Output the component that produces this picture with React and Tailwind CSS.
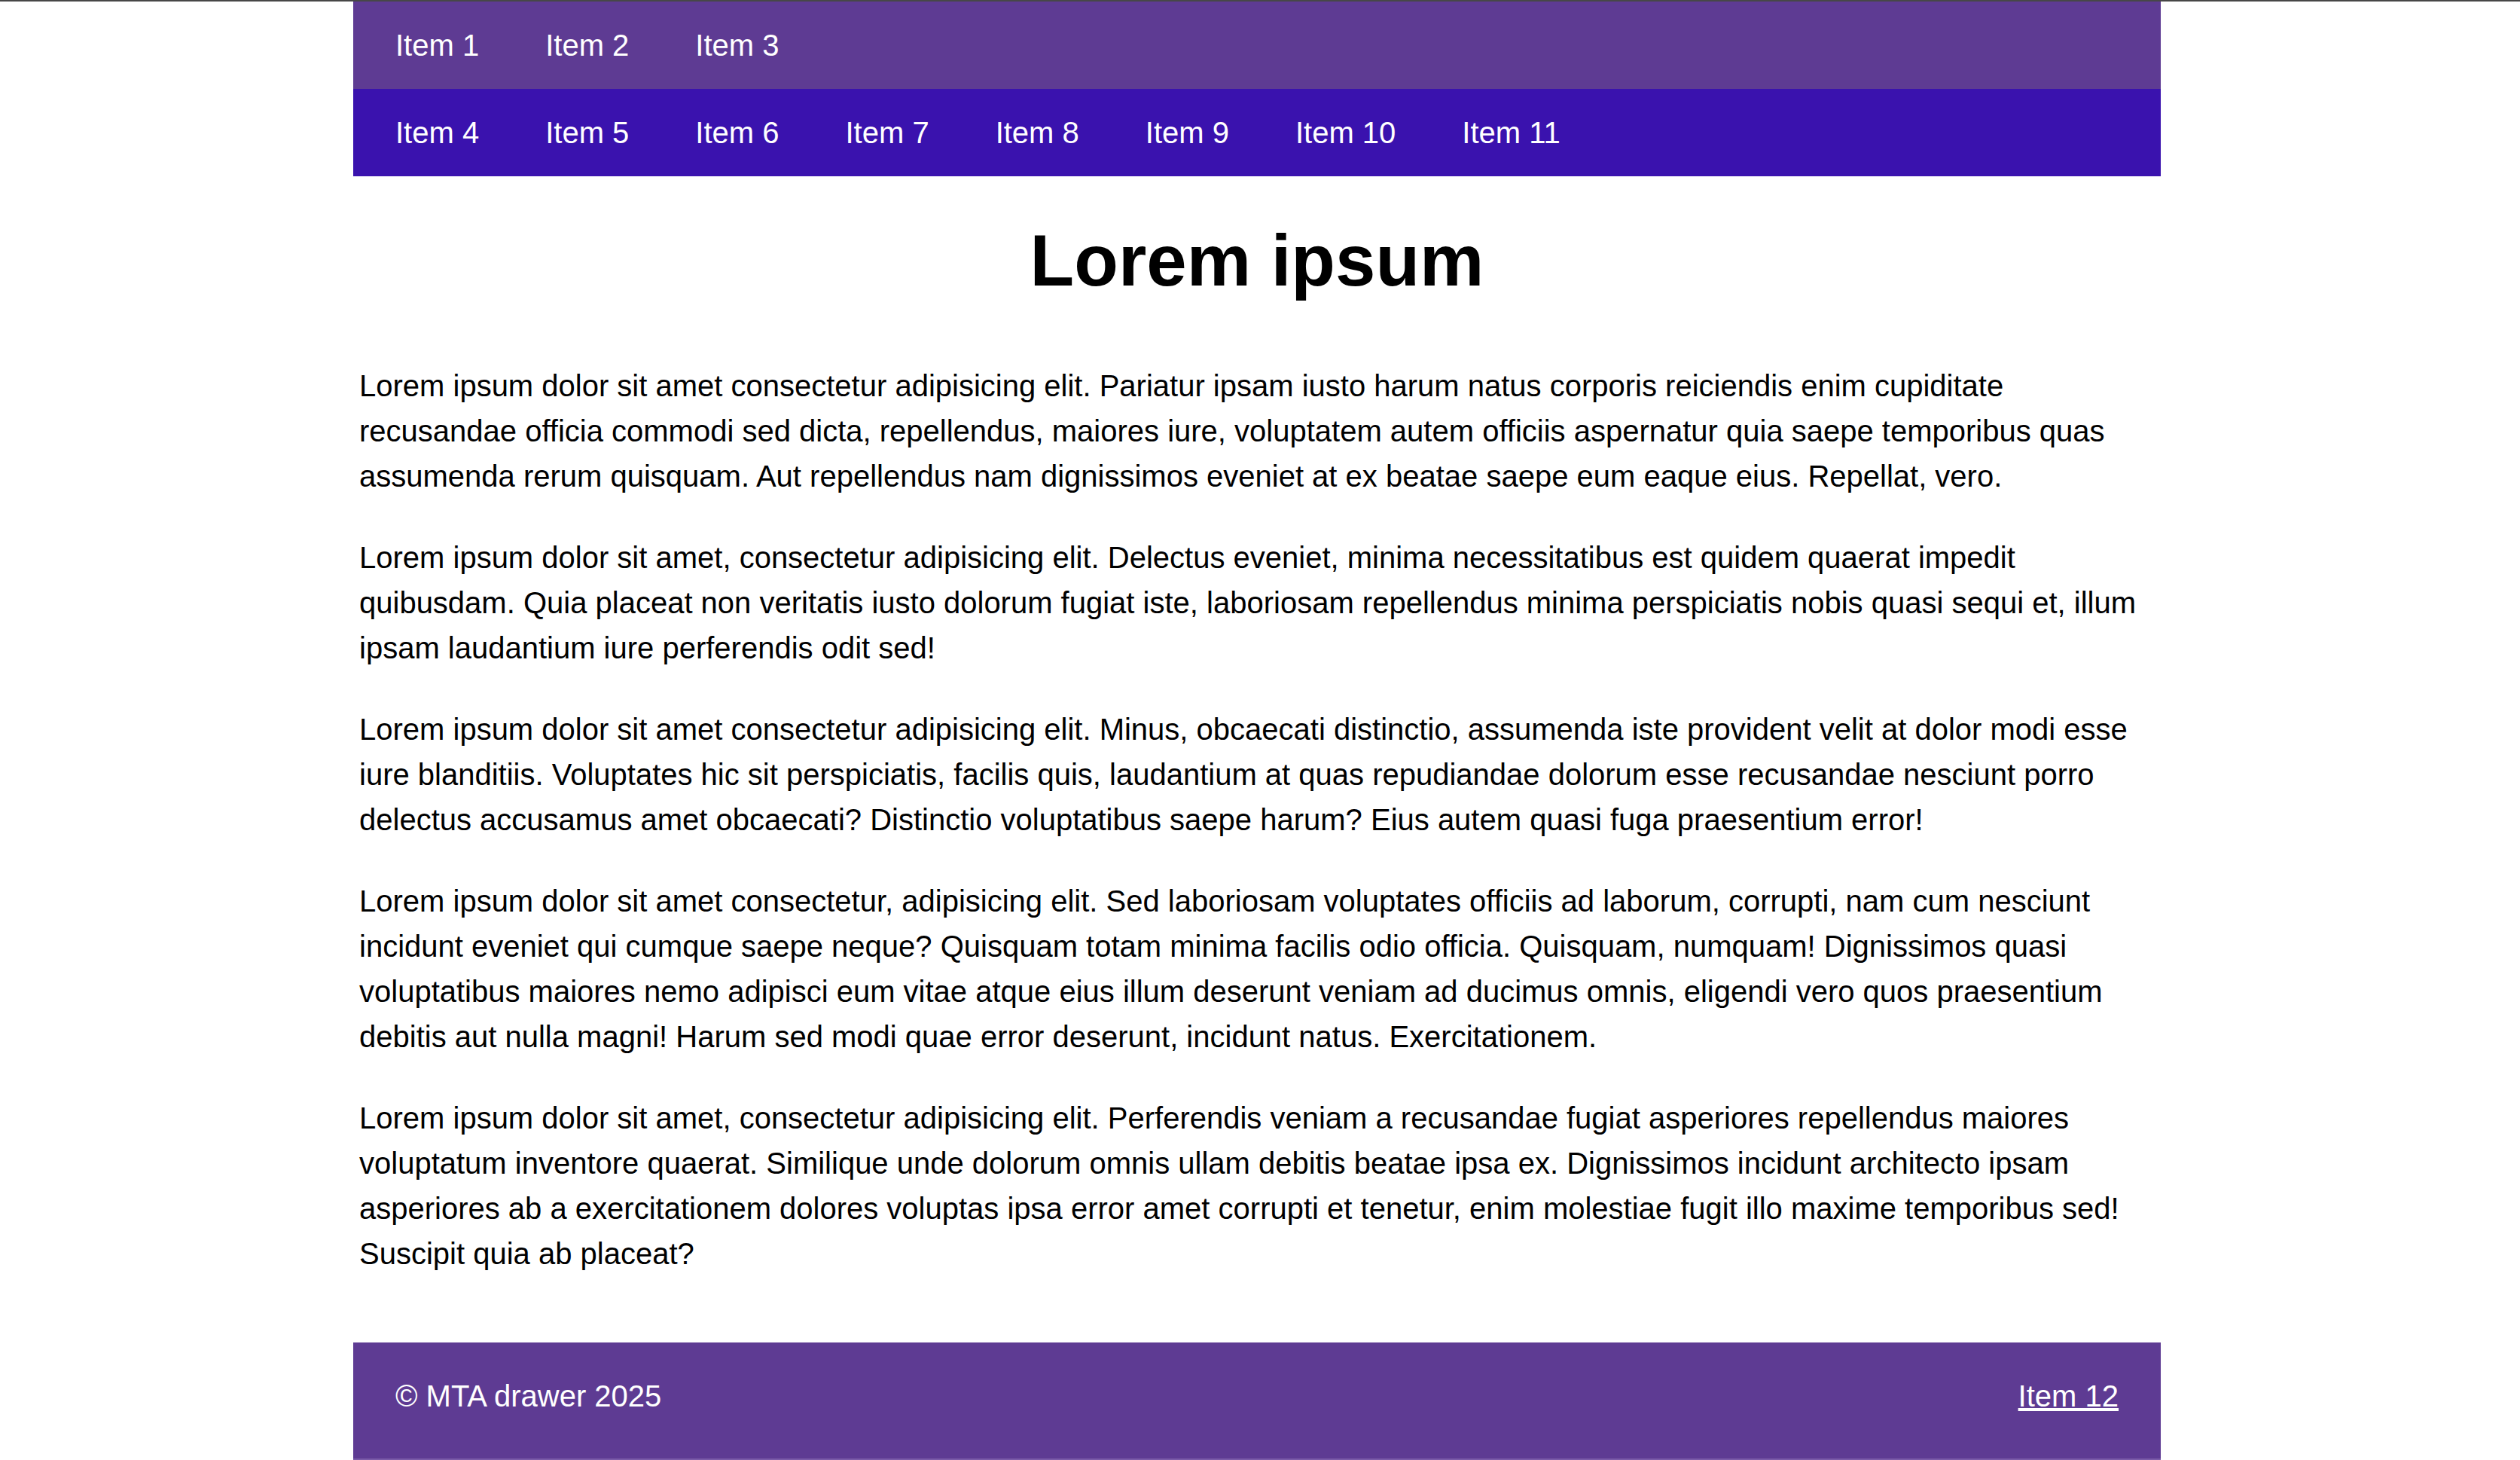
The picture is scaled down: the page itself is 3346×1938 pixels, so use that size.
export default function App() {
  const row1 = ["Item 1", "Item 2", "Item 3"];
  const row2 = ["Item 4", "Item 5", "Item 6", "Item 7", "Item 8", "Item 9", "Item 10", "Item 11"];
  const paras = [
    "Lorem ipsum dolor sit amet consectetur adipisicing elit. Pariatur ipsam iusto harum natus corporis reiciendis enim cupiditate recusandae officia commodi sed dicta, repellendus, maiores iure, voluptatem autem officiis aspernatur quia saepe temporibus quas assumenda rerum quisquam. Aut repellendus nam dignissimos eveniet at ex beatae saepe eum eaque eius. Repellat, vero.",
    "Lorem ipsum dolor sit amet, consectetur adipisicing elit. Delectus eveniet, minima necessitatibus est quidem quaerat impedit quibusdam. Quia placeat non veritatis iusto dolorum fugiat iste, laboriosam repellendus minima perspiciatis nobis quasi sequi et, illum ipsam laudantium iure perferendis odit sed!",
    "Lorem ipsum dolor sit amet consectetur adipisicing elit. Minus, obcaecati distinctio, assumenda iste provident velit at dolor modi esse iure blanditiis. Voluptates hic sit perspiciatis, facilis quis, laudantium at quas repudiandae dolorum esse recusandae nesciunt porro delectus accusamus amet obcaecati? Distinctio voluptatibus saepe harum? Eius autem quasi fuga praesentium error!",
    "Lorem ipsum dolor sit amet consectetur, adipisicing elit. Sed laboriosam voluptates officiis ad laborum, corrupti, nam cum nesciunt incidunt eveniet qui cumque saepe neque? Quisquam totam minima facilis odio officia. Quisquam, numquam! Dignissimos quasi voluptatibus maiores nemo adipisci eum vitae atque eius illum deserunt veniam ad ducimus omnis, eligendi vero quos praesentium debitis aut nulla magni! Harum sed modi quae error deserunt, incidunt natus. Exercitationem.",
    "Lorem ipsum dolor sit amet, consectetur adipisicing elit. Perferendis veniam a recusandae fugiat asperiores repellendus maiores voluptatum inventore quaerat. Similique unde dolorum omnis ullam debitis beatae ipsa ex. Dignissimos incidunt architecto ipsam asperiores ab a exercitationem dolores voluptas ipsa error amet corrupti et tenetur, enim molestiae fugit illo maxime temporibus sed! Suscipit quia ab placeat?",
  ];
  return (
    <div className="min-h-[1938px] bg-white font-['Liberation_Sans',Arial,sans-serif]">
      <div className="h-[2px] w-full bg-[#474747]" />
      <div className="flex justify-center pr-[8px]">
        <div className="w-[2400px]">
          <nav>
            <ul className="flex h-[116px] items-center gap-[88px] bg-[#5e3b93] pl-[56px] text-[40px] text-white">
              {row1.map((t) => (
                <li key={t}>{t}</li>
              ))}
            </ul>
            <ul className="flex h-[116px] items-center gap-[88px] bg-[#3a12ae] pl-[56px] text-[40px] text-white">
              {row2.map((t) => (
                <li key={t}>{t}</li>
              ))}
            </ul>
          </nav>
          <main className="px-[8px] pb-[40px] pt-[57px]">
            <h1 className="mb-[81px] text-center text-[96px] font-bold leading-[110px] text-black">Lorem ipsum</h1>
            {paras.map((p, i) => (
              <p key={i} className="mb-[48px] text-[40px] leading-[60px] text-black">
                {p}
              </p>
            ))}
          </main>
          <footer className="flex h-[156px] items-start justify-between border-b-2 border-[#7b5ca9] bg-[#5e3b93] px-[56px] pt-[48px] text-[40px] leading-[46px] text-white">
            <span>© MTA drawer 2025</span>
            <a href="#" className="underline">Item 12</a>
          </footer>
        </div>
      </div>
    </div>
  );
}
